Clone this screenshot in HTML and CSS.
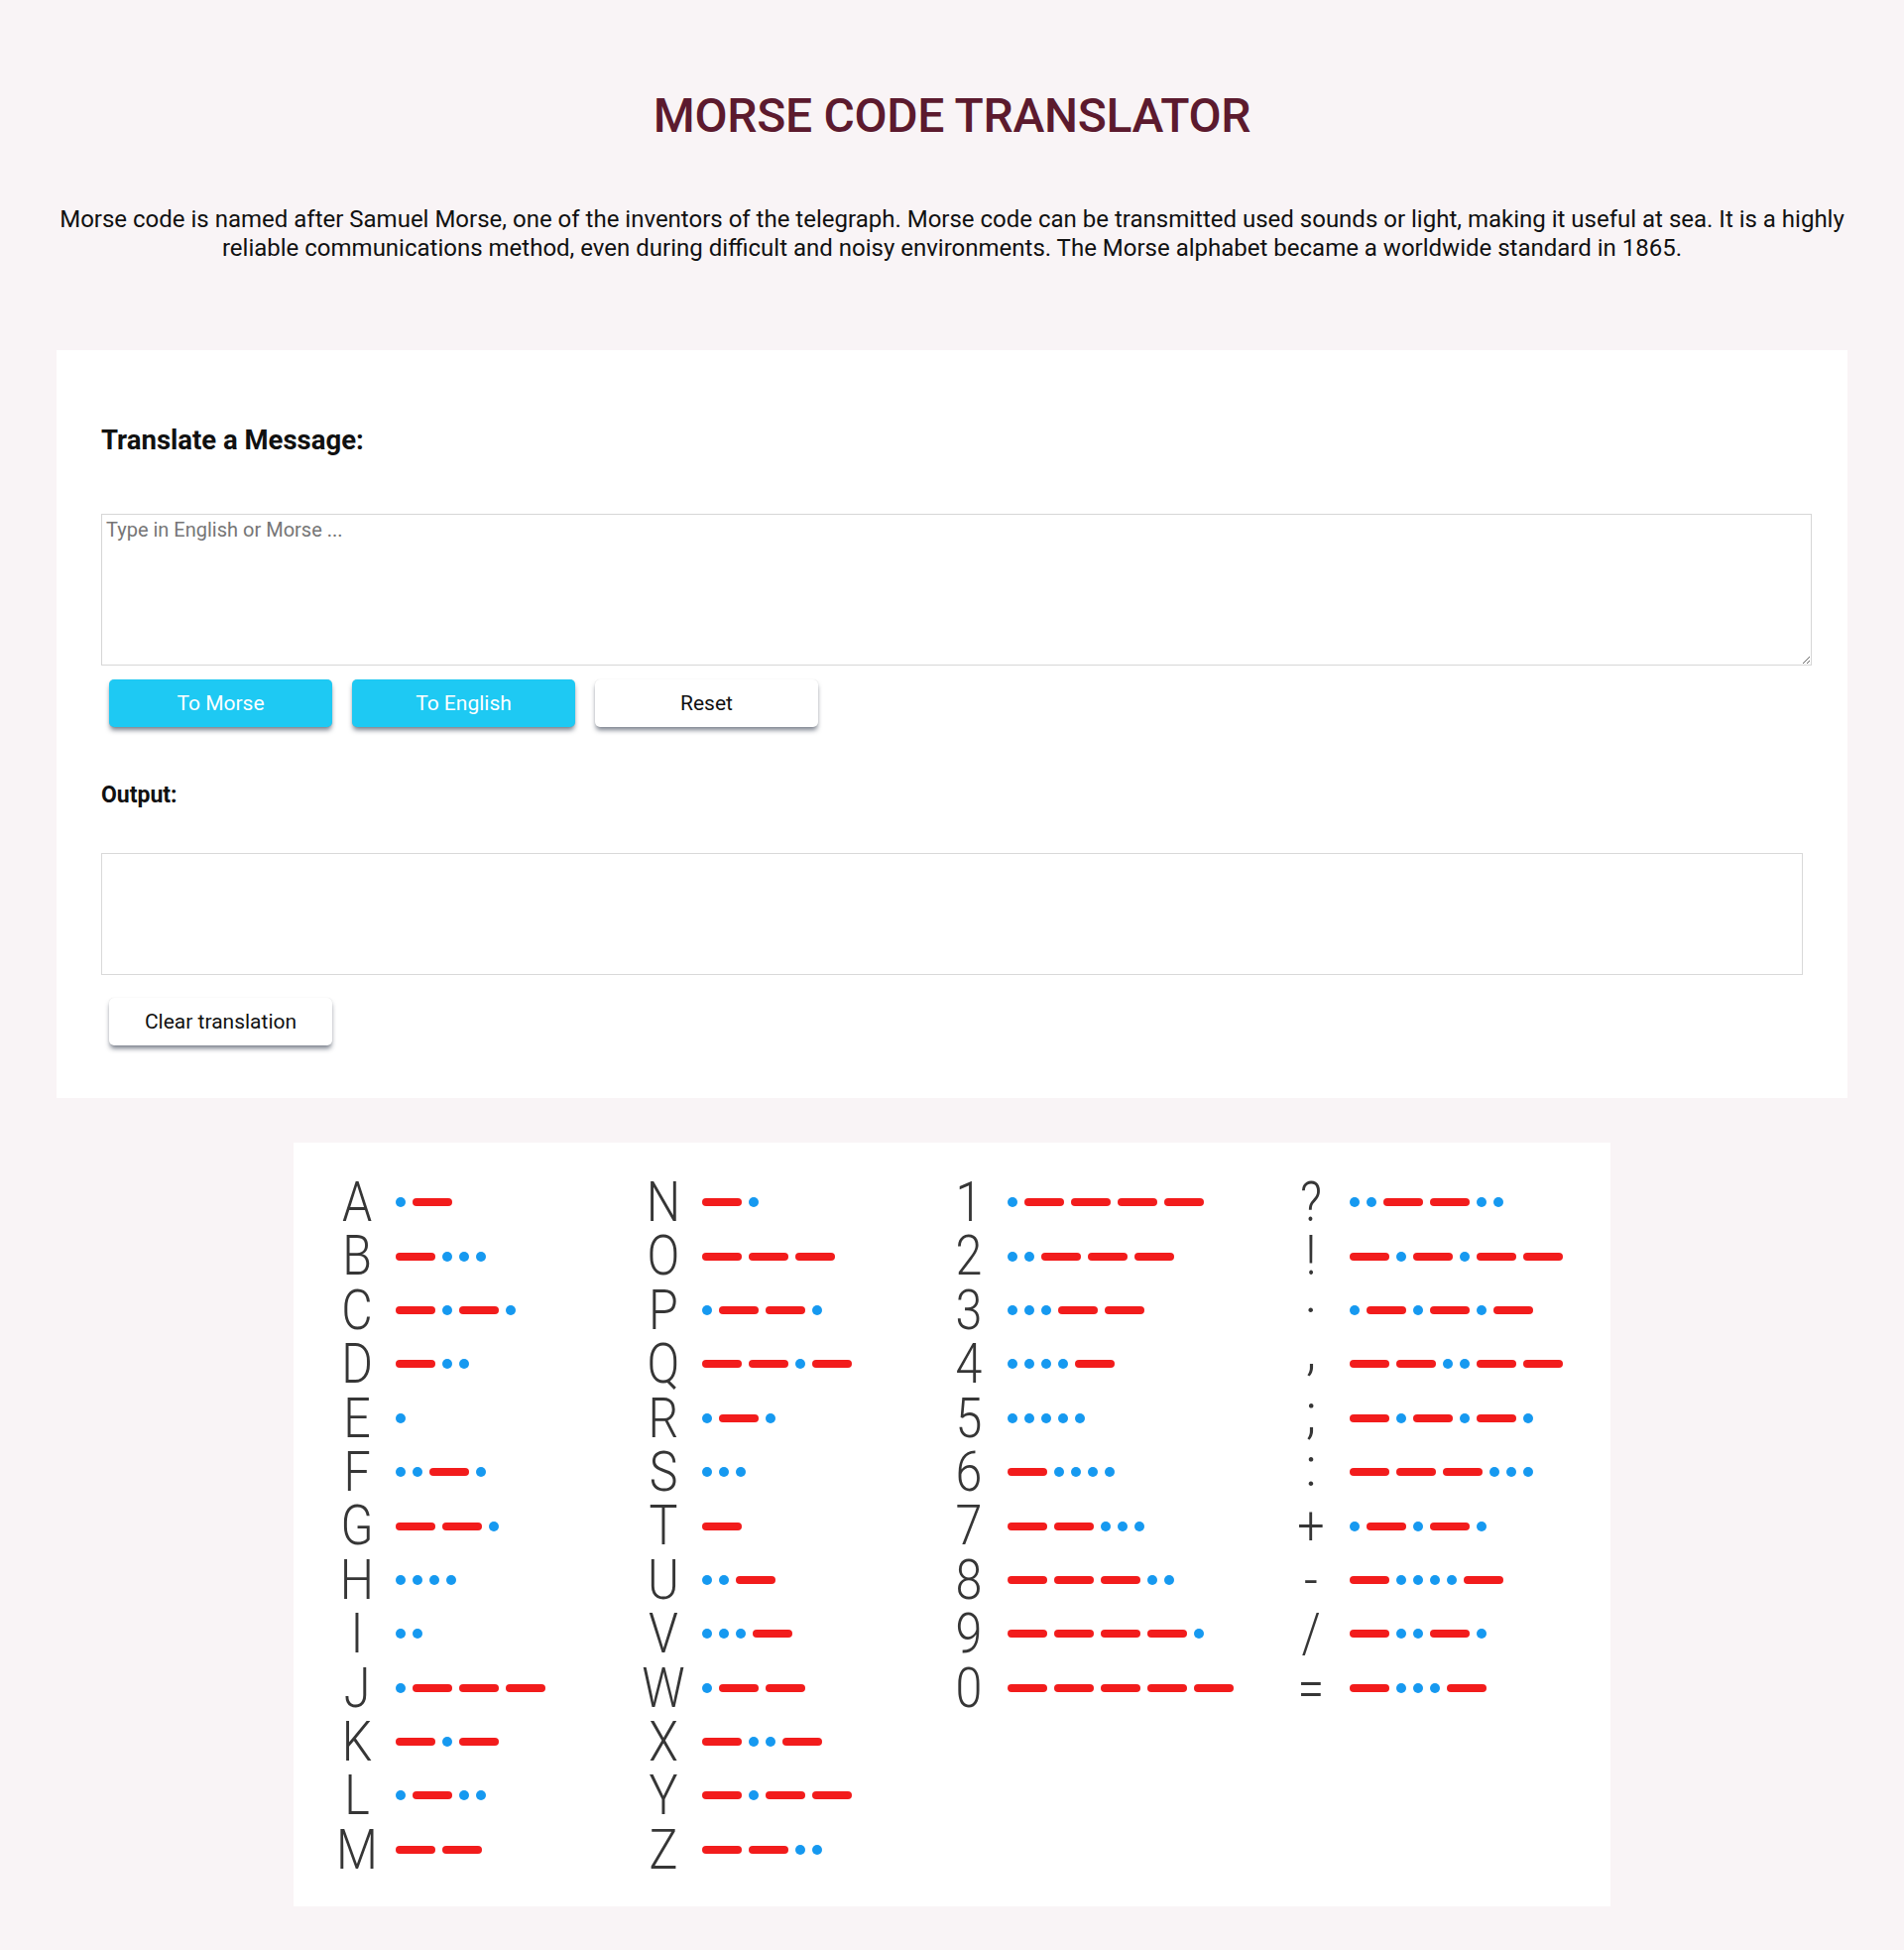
FILE: index.html
```html
<!DOCTYPE html>
<html lang="en">
<head>
<meta charset="utf-8">
<title>Morse Code Translator</title>
<link rel="stylesheet" href="styles.css">
</head>
<body>
<header class="hero">
  <h1 class="title">MORSE CODE TRANSLATOR</h1>
  <p class="intro">Morse code is named after Samuel Morse, one of the inventors of the telegraph. Morse code can be transmitted used sounds or light, making it useful at sea. It is a highly reliable communications method, even during difficult and noisy environments. The Morse alphabet became a worldwide standard in 1865.</p>
</header>

<main class="card">
  <h2 class="card-heading">Translate a Message:</h2>
  <textarea class="input" placeholder="Type in English or Morse ..."></textarea>
  <div class="actions">
    <button class="btn btn-primary" type="button">To Morse</button>
    <button class="btn btn-primary" type="button">To English</button>
    <button class="btn btn-light" type="button">Reset</button>
  </div>
  <h3 class="output-label">Output:</h3>
  <div class="output"></div>
  <div class="actions actions-clear">
    <button class="btn btn-light" type="button">Clear translation</button>
  </div>
</main>

<section class="chart">
  <div class="chart-col">
    <div class="row"><span class="glyph">A</span><span class="code"><i class="dot"></i><i class="dash"></i></span></div>
    <div class="row"><span class="glyph">B</span><span class="code"><i class="dash"></i><i class="dot"></i><i class="dot"></i><i class="dot"></i></span></div>
    <div class="row"><span class="glyph">C</span><span class="code"><i class="dash"></i><i class="dot"></i><i class="dash"></i><i class="dot"></i></span></div>
    <div class="row"><span class="glyph">D</span><span class="code"><i class="dash"></i><i class="dot"></i><i class="dot"></i></span></div>
    <div class="row"><span class="glyph">E</span><span class="code"><i class="dot"></i></span></div>
    <div class="row"><span class="glyph">F</span><span class="code"><i class="dot"></i><i class="dot"></i><i class="dash"></i><i class="dot"></i></span></div>
    <div class="row"><span class="glyph">G</span><span class="code"><i class="dash"></i><i class="dash"></i><i class="dot"></i></span></div>
    <div class="row"><span class="glyph">H</span><span class="code"><i class="dot"></i><i class="dot"></i><i class="dot"></i><i class="dot"></i></span></div>
    <div class="row"><span class="glyph">I</span><span class="code"><i class="dot"></i><i class="dot"></i></span></div>
    <div class="row"><span class="glyph">J</span><span class="code"><i class="dot"></i><i class="dash"></i><i class="dash"></i><i class="dash"></i></span></div>
    <div class="row"><span class="glyph">K</span><span class="code"><i class="dash"></i><i class="dot"></i><i class="dash"></i></span></div>
    <div class="row"><span class="glyph">L</span><span class="code"><i class="dot"></i><i class="dash"></i><i class="dot"></i><i class="dot"></i></span></div>
    <div class="row"><span class="glyph">M</span><span class="code"><i class="dash"></i><i class="dash"></i></span></div>
  </div>
  <div class="chart-col">
    <div class="row"><span class="glyph">N</span><span class="code"><i class="dash"></i><i class="dot"></i></span></div>
    <div class="row"><span class="glyph">O</span><span class="code"><i class="dash"></i><i class="dash"></i><i class="dash"></i></span></div>
    <div class="row"><span class="glyph">P</span><span class="code"><i class="dot"></i><i class="dash"></i><i class="dash"></i><i class="dot"></i></span></div>
    <div class="row"><span class="glyph">Q</span><span class="code"><i class="dash"></i><i class="dash"></i><i class="dot"></i><i class="dash"></i></span></div>
    <div class="row"><span class="glyph">R</span><span class="code"><i class="dot"></i><i class="dash"></i><i class="dot"></i></span></div>
    <div class="row"><span class="glyph">S</span><span class="code"><i class="dot"></i><i class="dot"></i><i class="dot"></i></span></div>
    <div class="row"><span class="glyph">T</span><span class="code"><i class="dash"></i></span></div>
    <div class="row"><span class="glyph">U</span><span class="code"><i class="dot"></i><i class="dot"></i><i class="dash"></i></span></div>
    <div class="row"><span class="glyph">V</span><span class="code"><i class="dot"></i><i class="dot"></i><i class="dot"></i><i class="dash"></i></span></div>
    <div class="row"><span class="glyph">W</span><span class="code"><i class="dot"></i><i class="dash"></i><i class="dash"></i></span></div>
    <div class="row"><span class="glyph">X</span><span class="code"><i class="dash"></i><i class="dot"></i><i class="dot"></i><i class="dash"></i></span></div>
    <div class="row"><span class="glyph">Y</span><span class="code"><i class="dash"></i><i class="dot"></i><i class="dash"></i><i class="dash"></i></span></div>
    <div class="row"><span class="glyph">Z</span><span class="code"><i class="dash"></i><i class="dash"></i><i class="dot"></i><i class="dot"></i></span></div>
  </div>
  <div class="chart-col">
    <div class="row"><span class="glyph">1</span><span class="code"><i class="dot"></i><i class="dash"></i><i class="dash"></i><i class="dash"></i><i class="dash"></i></span></div>
    <div class="row"><span class="glyph">2</span><span class="code"><i class="dot"></i><i class="dot"></i><i class="dash"></i><i class="dash"></i><i class="dash"></i></span></div>
    <div class="row"><span class="glyph">3</span><span class="code"><i class="dot"></i><i class="dot"></i><i class="dot"></i><i class="dash"></i><i class="dash"></i></span></div>
    <div class="row"><span class="glyph">4</span><span class="code"><i class="dot"></i><i class="dot"></i><i class="dot"></i><i class="dot"></i><i class="dash"></i></span></div>
    <div class="row"><span class="glyph">5</span><span class="code"><i class="dot"></i><i class="dot"></i><i class="dot"></i><i class="dot"></i><i class="dot"></i></span></div>
    <div class="row"><span class="glyph">6</span><span class="code"><i class="dash"></i><i class="dot"></i><i class="dot"></i><i class="dot"></i><i class="dot"></i></span></div>
    <div class="row"><span class="glyph">7</span><span class="code"><i class="dash"></i><i class="dash"></i><i class="dot"></i><i class="dot"></i><i class="dot"></i></span></div>
    <div class="row"><span class="glyph">8</span><span class="code"><i class="dash"></i><i class="dash"></i><i class="dash"></i><i class="dot"></i><i class="dot"></i></span></div>
    <div class="row"><span class="glyph">9</span><span class="code"><i class="dash"></i><i class="dash"></i><i class="dash"></i><i class="dash"></i><i class="dot"></i></span></div>
    <div class="row"><span class="glyph">0</span><span class="code"><i class="dash"></i><i class="dash"></i><i class="dash"></i><i class="dash"></i><i class="dash"></i></span></div>
  </div>
  <div class="chart-col">
    <div class="row"><span class="glyph">?</span><span class="code"><i class="dot"></i><i class="dot"></i><i class="dash"></i><i class="dash"></i><i class="dot"></i><i class="dot"></i></span></div>
    <div class="row"><span class="glyph">!</span><span class="code"><i class="dash"></i><i class="dot"></i><i class="dash"></i><i class="dot"></i><i class="dash"></i><i class="dash"></i></span></div>
    <div class="row"><span class="glyph glyph-low">.</span><span class="code"><i class="dot"></i><i class="dash"></i><i class="dot"></i><i class="dash"></i><i class="dot"></i><i class="dash"></i></span></div>
    <div class="row"><span class="glyph glyph-comma">,</span><span class="code"><i class="dash"></i><i class="dash"></i><i class="dot"></i><i class="dot"></i><i class="dash"></i><i class="dash"></i></span></div>
    <div class="row"><span class="glyph glyph-colon">;</span><span class="code"><i class="dash"></i><i class="dot"></i><i class="dash"></i><i class="dot"></i><i class="dash"></i><i class="dot"></i></span></div>
    <div class="row"><span class="glyph glyph-colon">:</span><span class="code"><i class="dash"></i><i class="dash"></i><i class="dash"></i><i class="dot"></i><i class="dot"></i><i class="dot"></i></span></div>
    <div class="row"><span class="glyph">+</span><span class="code"><i class="dot"></i><i class="dash"></i><i class="dot"></i><i class="dash"></i><i class="dot"></i></span></div>
    <div class="row"><span class="glyph">-</span><span class="code"><i class="dash"></i><i class="dot"></i><i class="dot"></i><i class="dot"></i><i class="dot"></i><i class="dash"></i></span></div>
    <div class="row"><span class="glyph">/</span><span class="code"><i class="dash"></i><i class="dot"></i><i class="dot"></i><i class="dash"></i><i class="dot"></i></span></div>
    <div class="row"><span class="glyph">=</span><span class="code"><i class="dash"></i><i class="dot"></i><i class="dot"></i><i class="dot"></i><i class="dash"></i></span></div>
  </div>
</section>
</body>
</html>
```

FILE: styles.css
```css
* {
  box-sizing: border-box;
}

html, body {
  margin: 0;
  padding: 0;
}

body {
  background: #f9f4f6;
  font-family: "Roboto", "Liberation Sans", sans-serif;
  color: #111;
  min-height: 1966px;
  padding-bottom: 44px;
}

.hero {
  padding: 89px 57px 0;
  text-align: center;
}

.title {
  margin: 0;
  font-size: 48px;
  line-height: 56px;
  font-weight: 500;
  letter-spacing: -0.3px;
  color: #5c1a2e;
}

.intro {
  margin: 62px 0 0;
  font-size: 24px;
  line-height: 29px;
  color: #111;
}

.card {
  display: block;
  margin: 88px 57px 0;
  background: #fff;
  padding: 74px 36px 53px 45px;
}

.card-heading {
  margin: 0;
  font-size: 27.5px;
  line-height: 33px;
  font-weight: 700;
  color: #111;
}

.input {
  display: block;
  width: 1725px;
  height: 153px;
  margin: 58px 0 0;
  padding: 4px 4px;
  border: 1px solid #d6d6d6;
  font-family: "Roboto", "Liberation Sans", sans-serif;
  font-size: 20px;
  line-height: 23px;
  color: #222;
  background: #fff;
  resize: vertical;
  outline: none;
}

.input::placeholder {
  color: #767676;
}

.actions {
  display: flex;
  gap: 20px;
  margin-top: 14px;
  padding-left: 8px;
}

.actions-clear {
  margin-top: 23px;
}

.btn {
  width: 225px;
  height: 48px;
  border: none;
  border-radius: 5px;
  font-family: "Roboto", "Liberation Sans", sans-serif;
  font-size: 21px;
  font-weight: 400;
  cursor: pointer;
  box-shadow: 0 0 1px rgba(0, 0, 0, 0.15), 0 4px 5px -1px rgba(30, 40, 60, 0.6);
}

.btn-primary {
  background: #1ec9f3;
  color: #fff;
}

.btn-light {
  background: #fff;
  color: #111;
}

.output-label {
  margin: 55px 0 0;
  font-size: 23px;
  line-height: 27px;
  font-weight: 700;
  color: #111;
}

.output {
  width: 1716px;
  height: 123px;
  margin-top: 45px;
  border: 1px solid #d9d9d9;
  background: #fff;
}

.chart {
  width: 1328px;
  height: 770px;
  margin: 45px auto 0;
  background: #fff;
  padding: 33px 0 30px 39px;
  display: grid;
  grid-template-columns: 309px 308px 345px 1fr;
  align-items: start;
}

.chart-col {
  display: flex;
  flex-direction: column;
}

.row {
  display: flex;
  align-items: center;
  height: 54.4px;
}

.glyph {
  width: 50px;
  flex: none;
  text-align: center;
  font-family: "Roboto", "Liberation Sans", sans-serif;
  font-weight: 300;
  font-size: 55px;
  line-height: 54.4px;
  color: #363636;
  transform: scaleX(0.88);
}

.glyph-low {
  transform: translateY(-17px);
}

.glyph-comma {
  transform: translateY(-14px);
}

.glyph-colon {
  transform: translateY(-5px);
}

.code {
  display: flex;
  align-items: center;
  gap: 7px;
  margin-left: 13.5px;
}

.dot {
  display: block;
  width: 10px;
  height: 10px;
  border-radius: 50%;
  background: #1699f0;
}

.dash {
  display: block;
  width: 40px;
  height: 8px;
  border-radius: 4px;
  background: #f21c1c;
}
```
